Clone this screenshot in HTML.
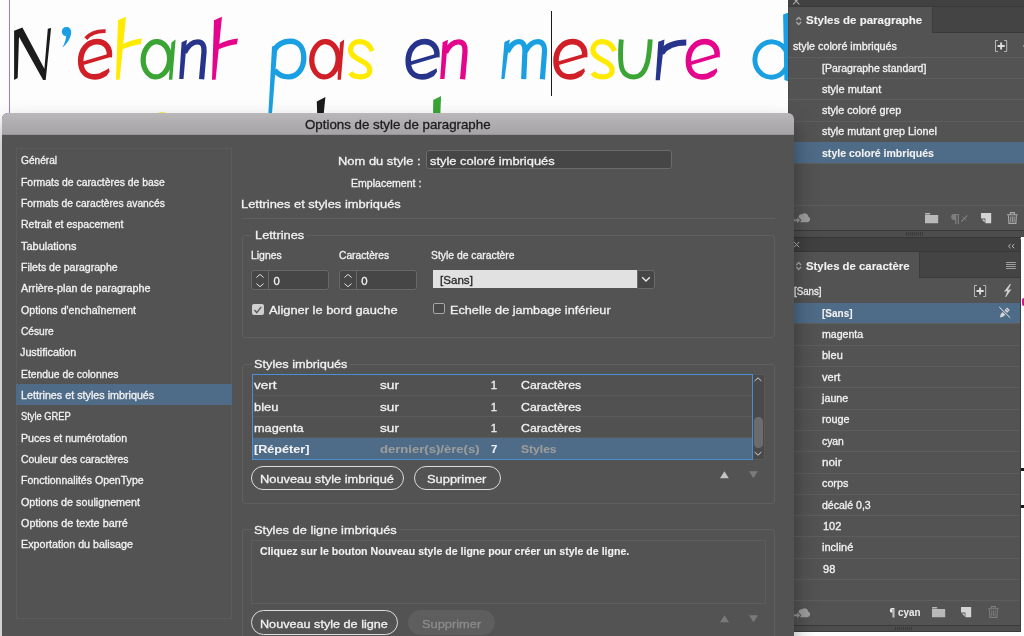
<!DOCTYPE html>
<html lang="fr">
<head>
<meta charset="utf-8">
<title>Options de style de paragraphe</title>
<style>
html,body{margin:0;padding:0;width:1024px;height:636px;overflow:hidden;}
body{width:1024px;height:636px;overflow:hidden;position:relative;background:#fdfdfd;font-family:"Liberation Sans",sans-serif;color:#f0f0f0;}
.abs{position:absolute;box-sizing:border-box;}
.t{position:absolute;white-space:pre;line-height:1;transform-origin:0 0;-webkit-text-stroke:0.3px currentColor;}
#ui{position:absolute;left:0;top:0;width:1024px;height:636px;overflow:hidden;will-change:transform;}
svg{position:absolute;overflow:visible;}
</style>
</head>
<body>
<div id="ui">
<div class="abs" style="left:0px;top:0px;width:788px;height:120px;background:#fdfdfd;"></div>
<div class="abs" style="left:9px;top:0px;width:1px;height:113px;background:#8f7cf2;"></div>
<svg style="left:0;top:0" width="788" height="120" viewBox="0 0 788 120"><g><path d="M14.1 30.7 L22.4 27.6 L44.4 68.8 L47.8 28.7 L51.1 28 L45.7 80.1 L43.1 80.1 L19 36.7 L17.7 78.1 L14.1 80.1 Z" fill="#1b1b1b"/><path d="M66.4 27 C69.2 27 71.2 29 71.2 32 C71.2 38 67 44 62.3 47.6 C64.5 44 66 40 66 36.1 C63.5 36.1 61.8 34 61.8 31.5 C61.8 29 63.8 27 66.4 27 Z" fill="#1aa0e2"/><g transform="translate(0,0)" fill="none" stroke="#d01f27"><path d="M83 63.2 L110.2 55.3" stroke-width="3.5"/><path d="M109.3 57.2 C110.6 47 104.5 41.6 97.2 41.6 C87.2 41.6 80.7 50 80.7 61 C80.7 71 86 76.9 94.6 76.9 C98.6 76.9 102 75.7 104.6 73.8" stroke-width="5.6"/><path d="M102.6 71.8 C105 70.6 107.2 69.4 108.9 68.2 L109.6 71.4 C108.4 73.4 107 75 106 76.4 Z" fill="#d01f27" stroke="none"/><path d="M85.8 38.6 C90.5 33.2 98 30.9 105.6 31.2" stroke-width="3.9"/></g><g transform="translate(0,0)" fill="#ffea00"><path d="M118 20.2 L126 16.7 L119.6 79.7 L116 79.7 Z"/><path d="M122.6 44.3 C128 41.3 135 39.4 142 38.6 L140.8 44.3 C134 45.1 128 46.9 122 49.6 Z"/></g><g transform="translate(0,0)"><ellipse cx="156.4" cy="59.3" rx="13.2" ry="17.6" fill="none" stroke="#3aa535" stroke-width="5.3" transform="rotate(4 156.4 59.3)"/><path d="M171.4 42.6 L175.6 39.6 L172.3 79.7 L168.9 79.7 Z" fill="#3aa535"/></g><g transform="translate(0,0)"><path d="M181.6 42.2 L186.9 39.8 L183.5 79 L179.2 79 Z" fill="#27348b"/><path d="M184.6 52.5 C188 45.5 193 41.8 197.8 41.8 C202.6 41.8 204.6 46 204 52 L201.6 79.2" fill="none" stroke="#27348b" stroke-width="5.3"/></g><g transform="translate(96,0)" fill="#e4058c"><path d="M118 20.2 L126 16.7 L119.6 79.7 L116 79.7 Z"/><path d="M122.6 44.3 C128 41.3 135 39.4 142 38.6 L140.8 44.3 C134 45.1 128 46.9 122 49.6 Z"/></g><path d="M272 46.4 L277.6 44.4 L272 113.5 L268.4 113.5 Z" fill="#1aa0e2"/><path d="M274.8 49.5 C278 44 283.5 41.2 290.5 41.2 C299 41.2 303.8 48 303.8 58 C303.8 69 297 76.9 288.5 76.9 C282.5 76.9 277.5 74 274.6 70" fill="none" stroke="#1aa0e2" stroke-width="5.4"/><g transform="translate(168.6,0)"><ellipse cx="156.4" cy="59.3" rx="13.2" ry="17.6" fill="none" stroke="#d01f27" stroke-width="5.3" transform="rotate(4 156.4 59.3)"/><path d="M171.4 42.6 L175.6 39.6 L172.3 79.7 L168.9 79.7 Z" fill="#d01f27"/></g><g transform="translate(0,0)"><path d="M372.2 51 C369.5 44.5 364.5 41.6 360 41.6 C354 41.6 350.6 45.5 350.6 50 C350.6 55 355 57.6 361 60.6 C367 63.6 369.8 66 369.8 70 C369.8 74.6 365.6 76.9 360.4 76.9 C356 76.9 352.2 75.6 350.2 72.8" fill="none" stroke="#ffea00" stroke-width="5.2"/></g><g transform="translate(327.5,0)" fill="none" stroke="#27348b"><path d="M83 63.2 L110.2 55.3" stroke-width="3.5"/><path d="M109.3 57.2 C110.6 47 104.5 41.6 97.2 41.6 C87.2 41.6 80.7 50 80.7 61 C80.7 71 86 76.9 94.6 76.9 C98.6 76.9 102 75.7 104.6 73.8" stroke-width="5.6"/><path d="M102.6 71.8 C105 70.6 107.2 69.4 108.9 68.2 L109.6 71.4 C108.4 73.4 107 75 106 76.4 Z" fill="#27348b" stroke="none"/></g><g transform="translate(261,0)"><path d="M181.6 42.2 L186.9 39.8 L183.5 79 L179.2 79 Z" fill="#e4058c"/><path d="M184.6 52.5 C188 45.5 193 41.8 197.8 41.8 C202.6 41.8 204.6 46 204 52 L201.6 79.2" fill="none" stroke="#e4058c" stroke-width="5.3"/></g><path d="M504.4 42 L509.8 39.6 L504.5 79 L501.3 79 Z" fill="#1aa0e2"/><path d="M507.4 52 C510.5 45.5 514.5 41.7 518.8 41.7 C523.2 41.7 525.2 45.6 524.9 51.5 L523.7 79.2 M525 52 C528.5 45.5 533 41.7 537.8 41.7 C543 41.7 545 46 544.5 52 L542.4 79.2" fill="none" stroke="#1aa0e2" stroke-width="5.2"/><g transform="translate(475.3,0)" fill="none" stroke="#d01f27"><path d="M83 63.2 L110.2 55.3" stroke-width="3.5"/><path d="M109.3 57.2 C110.6 47 104.5 41.6 97.2 41.6 C87.2 41.6 80.7 50 80.7 61 C80.7 71 86 76.9 94.6 76.9 C98.6 76.9 102 75.7 104.6 73.8" stroke-width="5.6"/><path d="M102.6 71.8 C105 70.6 107.2 69.4 108.9 68.2 L109.6 71.4 C108.4 73.4 107 75 106 76.4 Z" fill="#d01f27" stroke="none"/></g><g transform="translate(242.4,0)"><path d="M372.2 51 C369.5 44.5 364.5 41.6 360 41.6 C354 41.6 350.6 45.5 350.6 50 C350.6 55 355 57.6 361 60.6 C367 63.6 369.8 66 369.8 70 C369.8 74.6 365.6 76.9 360.4 76.9 C356 76.9 352.2 75.6 350.2 72.8" fill="none" stroke="#ffea00" stroke-width="5.2"/></g><path d="M621.3 39.5 C620 55 620 64 622.5 70 C625 75.5 629 77 634 77 C640 77 645 72 647.5 62 C649 55 649.8 47 650.2 39.4" fill="none" stroke="#3aa535" stroke-width="4.9"/><path d="M658.3 41.8 L664.5 39.4 L659.8 80.2 L655.6 80.2 Z" fill="#27348b"/><path d="M661.4 53 C666 46 675 42.6 686.3 42.6" fill="none" stroke="#27348b" stroke-width="6"/><g transform="translate(607.7,0)" fill="none" stroke="#e4058c"><path d="M83 63.2 L110.2 55.3" stroke-width="3.5"/><path d="M109.3 57.2 C110.6 47 104.5 41.6 97.2 41.6 C87.2 41.6 80.7 50 80.7 61 C80.7 71 86 76.9 94.6 76.9 C98.6 76.9 102 75.7 104.6 73.8" stroke-width="5.6"/><path d="M102.6 71.8 C105 70.6 107.2 69.4 108.9 68.2 L109.6 71.4 C108.4 73.4 107 75 106 76.4 Z" fill="#e4058c" stroke="none"/></g><ellipse cx="771.5" cy="59.5" rx="16.6" ry="17.7" fill="none" stroke="#1aa0e2" stroke-width="4.9" transform="rotate(4 771.5 59.5)"/><path d="M783.1 14.5 L790 12 L790 82 L784.4 80 Z" fill="#1aa0e2"/><path d="M316.8 101.4 L325.4 97.1 L323.6 115 L317.2 115 Z" fill="#1b1b1b"/><path d="M433.3 100 L441.1 96.1 L440.3 115 L433 115 Z" fill="#3aa535"/><ellipse cx="162" cy="113.7" rx="4.9" ry="1.5" fill="#ffea00"/></g></svg>
<div class="abs" style="left:551.1px;top:10.8px;width:1.1px;height:85.3px;background:#1a1a1a;"></div>
<div class="abs" style="left:1021px;top:237px;width:3px;height:399px;background:#fdfdfd;"></div>
<div class="abs" style="left:1021.9px;top:298.3px;width:2.1px;height:7.7px;background:#d4148c;border-radius:2px 0 0 2px;"></div>
<div class="abs" style="left:1021.3px;top:467.5px;width:2.7px;height:3px;background:#1a1a1a;"></div>
<div class="abs" style="left:1021.3px;top:504.5px;width:2.7px;height:3px;background:#1a1a1a;"></div>
<div class="abs" style="left:788px;top:0px;width:236px;height:237.4px;background:#535353;"></div>
<div class="abs" style="left:788px;top:0px;width:1px;height:237.4px;background:#484848;"></div>
<div class="abs" style="left:788px;top:0px;width:236px;height:6.4px;background:#414141;"></div>
<div class="abs" style="left:788px;top:6px;width:236px;height:1px;background:#3a3a3a;"></div>
<div class="abs" style="left:932.2px;top:7px;width:91.8px;height:25.2px;background:#444444;"></div>
<div class="abs" style="left:932.2px;top:7px;width:1px;height:25.2px;background:#3c3c3c;"></div>
<div class="abs" style="left:932.2px;top:31.7px;width:91.8px;height:1px;background:#3a3a3a;"></div>
<div class="t" style="left:805.80px;top:14.00px;font-size:11.15px;color:#f2f2f2;font-weight:700;-webkit-text-stroke-width:0.1px;transform:scaleX(1.0312);line-height:12px;">Styles de paragraphe</div>
<div class="t" style="left:793.40px;top:41.00px;font-size:10.15px;color:#f2f2f2;transform:scaleX(1.0616);line-height:11px;">style coloré imbriqués</div>
<div class="abs" style="left:788px;top:56.9px;width:236px;height:1px;background:#5d5d5d;"></div>
<div class="abs" style="left:788px;top:78.1px;width:236px;height:1px;background:#5d5d5d;"></div>
<div class="abs" style="left:788px;top:99.3px;width:236px;height:1px;background:#5d5d5d;"></div>
<div class="abs" style="left:788px;top:120.5px;width:236px;height:1px;background:#5d5d5d;"></div>
<div class="abs" style="left:788px;top:141.8px;width:236px;height:1px;background:#5d5d5d;"></div>
<div class="abs" style="left:788px;top:163.0px;width:236px;height:1px;background:#5d5d5d;"></div>
<div class="abs" style="left:788px;top:142px;width:236px;height:21.3px;background:#4e6b87;"></div>
<div class="t" style="left:822.00px;top:63.00px;font-size:10.15px;color:#f2f2f2;transform:scaleX(1.0356);line-height:11px;">[Paragraphe standard]</div>
<div class="t" style="left:822.00px;top:84.00px;font-size:10.15px;color:#f2f2f2;transform:scaleX(1.0855);line-height:11px;">style mutant</div>
<div class="t" style="left:822.00px;top:105.00px;font-size:10.15px;color:#f2f2f2;transform:scaleX(1.0662);line-height:11px;">style coloré grep</div>
<div class="t" style="left:822.00px;top:126.00px;font-size:10.15px;color:#f2f2f2;transform:scaleX(1.069);line-height:11px;">style mutant grep Lionel</div>
<div class="t" style="left:822.00px;top:148.00px;font-size:10.15px;color:#f2f2f2;font-weight:700;-webkit-text-stroke-width:0.1px;transform:scaleX(1.0414);line-height:11px;">style coloré imbriqués</div>
<div class="abs" style="left:788px;top:205.2px;width:236px;height:1px;background:#5d5d5d;"></div>
<div class="abs" style="left:788px;top:229.6px;width:236px;height:1.6px;background:#3a3a3a;"></div>
<div class="abs" style="left:788px;top:231.2px;width:236px;height:5.4px;background:#4d4d4d;"></div>
<svg style="left:792.8px;top:-2.3000000000000003px" width="6.4" height="6.4" viewBox="0 0 6.4 6.4"><path d="M0 0 L6.4 6.4 M6.4 0 L0 6.4" stroke="#a8a8a8" stroke-width="1.1" fill="none"/></svg>
<svg style="left:795.9px;top:16.8px" width="5.4" height="8" viewBox="0 0 5.4 8"><path d="M0.3 2.9 L2.7 0.5 L5.1 2.9 M0.3 5.1 L2.7 7.5 L5.1 5.1" stroke="#a8a8a8" stroke-width="1.35" fill="none"/></svg>
<svg style="left:994.8px;top:39.7px" width="12.2" height="12" viewBox="0 0 12.2 12"><rect x="1.4" y="1.4" width="9.4" height="9.2" fill="#4b4b4b"/><path d="M3 0.5 L0.5 0.5 L0.5 11.5 L3 11.5 M9.2 0.5 L11.7 0.5 L11.7 11.5 L9.2 11.5" stroke="#b9b9b9" stroke-width="1" fill="none"/><path d="M6.1 2.4 L6.1 9.6 M2.5 6 L9.7 6" stroke="#dedede" stroke-width="1.9" fill="none"/></svg>
<svg style="left:794.4px;top:212.3px" width="17" height="11.5" viewBox="0 0 17 11.5"><path d="M6.2 10.2 L13.6 10.2 A3 3 0 0 0 14.2 4.4 A3.6 3.6 0 0 0 8.2 2.2 A3.2 3.2 0 0 0 4.6 5.2 L7.3 8 Z" fill="#9d9d9d"/><path d="M0 7.3 L3.2 7.3 L3.2 5.3 L6.2 8.2 L3.2 11.2 L3.2 9.2 L0 9.2 Z" fill="#9d9d9d" opacity="0.85"/></svg>
<svg style="left:924.9px;top:212.6px" width="13.2" height="10.2" viewBox="0 0 13.2 10.2"><path d="M0 0.6 Q0 0 0.6 0 L4.6 0 Q5.2 0 5.2 0.6 L5.2 1.4 L0 1.4 Z M0 2.1 L13.2 2.1 L13.2 10.2 L0 10.2 Z" fill="#b9b9b9"/></svg>
<svg style="left:951px;top:213.5px" width="17" height="10.4" viewBox="0 0 17 10.4"><path d="M3.1 0 L8.2 0 L8.2 1 L7.9 1 L7.9 10.2 L6.7 10.2 L6.7 1 L5.3 1 L5.3 10.2 L4.1 10.2 L4.1 5.9 L3.1 5.9 A2.95 2.95 0 0 1 3.1 0 Z" fill="#7f7f7f"/><path d="M10.4 7.6 L16.4 1.4" stroke="#7f7f7f" stroke-width="1.25" fill="none"/><path d="M11.6 2.6 L15.4 6.4" stroke="#7f7f7f" stroke-width="0.9" fill="none"/></svg>
<svg style="left:980.9px;top:212.6px" width="10.2" height="10.2" viewBox="0 0 10.2 10.2"><path d="M0 0 L10.2 0 L10.2 10.2 L4.4 10.2 L4.4 5.4 L0 5.4 Z" fill="#d4d4d4"/><path d="M1 6.4 L3.6 6.4 L3.6 9.4 Z" fill="#d4d4d4"/></svg>
<svg style="left:1007.3px;top:211.9px" width="10.8" height="12" viewBox="0 0 10.8 12"><path d="M0 2.7 L10.8 2.7 M3.4 2.4 L3.4 0.6 L7.4 0.6 L7.4 2.4" stroke="#a9a9a9" stroke-width="1.1" fill="none"/><path d="M1.4 3.2 L1.9 11.4 L8.9 11.4 L9.4 3.2" stroke="#a9a9a9" stroke-width="1.1" fill="none"/><path d="M3.7 4.4 L3.7 10 M5.4 4.4 L5.4 10 M7.1 4.4 L7.1 10" stroke="#a9a9a9" stroke-width="0.9" fill="none"/></svg>
<svg style="left:906px;top:231.8px" width="18" height="3.8" viewBox="0 0 18 3.8"><rect x="0" y="0" width="1" height="3.8" fill="#3a3a3a"/><rect x="2" y="0" width="1" height="3.8" fill="#3a3a3a"/><rect x="4" y="0" width="1" height="3.8" fill="#3a3a3a"/><rect x="6" y="0" width="1" height="3.8" fill="#3a3a3a"/><rect x="8" y="0" width="1" height="3.8" fill="#3a3a3a"/><rect x="10" y="0" width="1" height="3.8" fill="#3a3a3a"/><rect x="12" y="0" width="1" height="3.8" fill="#3a3a3a"/><rect x="14" y="0" width="1" height="3.8" fill="#3a3a3a"/><rect x="16" y="0" width="1" height="3.8" fill="#3a3a3a"/></svg>
<div class="abs" style="left:1022.9px;top:45.4px;width:1.1px;height:2px;background:#8c8c8c;"></div>
<div class="abs" style="left:788px;top:237px;width:233.3px;height:395px;background:#535353;border-radius:0 4px 0 0;"></div>
<div class="abs" style="left:788px;top:237px;width:233.3px;height:14.6px;background:#404040;border-radius:0 4px 0 0;"></div>
<div class="abs" style="left:788px;top:251px;width:233.3px;height:1px;background:#393939;"></div>
<div class="abs" style="left:919.1px;top:252px;width:102.2px;height:25.6px;background:#444444;"></div>
<div class="abs" style="left:919.1px;top:252px;width:1px;height:25.6px;background:#3c3c3c;"></div>
<div class="abs" style="left:919.1px;top:277px;width:102.2px;height:1px;background:#3a3a3a;"></div>
<div class="t" style="left:805.80px;top:260.00px;font-size:11.02px;color:#f2f2f2;font-weight:700;-webkit-text-stroke-width:0.1px;transform:scaleX(1.0311);line-height:12px;">Styles de caractère</div>
<div class="t" style="left:793.80px;top:286.00px;font-size:10.15px;color:#f2f2f2;transform:scaleX(0.9592);line-height:11px;">[Sans]</div>
<div class="abs" style="left:788px;top:302.8px;width:233.3px;height:1px;background:#5d5d5d;"></div>
<div class="abs" style="left:788px;top:323.2px;width:233.3px;height:1px;background:#5d5d5d;"></div>
<div class="abs" style="left:788px;top:344.9px;width:233.3px;height:1px;background:#5d5d5d;"></div>
<div class="abs" style="left:788px;top:366.16999999999996px;width:233.3px;height:1px;background:#5d5d5d;"></div>
<div class="abs" style="left:788px;top:387.44px;width:233.3px;height:1px;background:#5d5d5d;"></div>
<div class="abs" style="left:788px;top:408.71px;width:233.3px;height:1px;background:#5d5d5d;"></div>
<div class="abs" style="left:788px;top:429.97999999999996px;width:233.3px;height:1px;background:#5d5d5d;"></div>
<div class="abs" style="left:788px;top:451.25px;width:233.3px;height:1px;background:#5d5d5d;"></div>
<div class="abs" style="left:788px;top:472.52px;width:233.3px;height:1px;background:#5d5d5d;"></div>
<div class="abs" style="left:788px;top:493.78999999999996px;width:233.3px;height:1px;background:#5d5d5d;"></div>
<div class="abs" style="left:788px;top:515.06px;width:233.3px;height:1px;background:#5d5d5d;"></div>
<div class="abs" style="left:788px;top:536.3299999999999px;width:233.3px;height:1px;background:#5d5d5d;"></div>
<div class="abs" style="left:788px;top:557.5999999999999px;width:233.3px;height:1px;background:#5d5d5d;"></div>
<div class="abs" style="left:788px;top:578.87px;width:233.3px;height:1px;background:#5d5d5d;"></div>
<div class="abs" style="left:788px;top:600.14px;width:233.3px;height:1px;background:#5d5d5d;"></div>
<div class="abs" style="left:788px;top:302.9px;width:233.3px;height:20.3px;background:#4e6b87;"></div>
<div class="t" style="left:822.20px;top:308.00px;font-size:10.15px;color:#f2f2f2;font-weight:700;-webkit-text-stroke-width:0.1px;transform:scaleX(0.9864);line-height:11px;">[Sans]</div>
<div class="t" style="left:822.20px;top:329.00px;font-size:10.15px;color:#f2f2f2;transform:scaleX(1.0455);line-height:11px;">magenta</div>
<div class="t" style="left:822.20px;top:350.00px;font-size:10.15px;color:#f2f2f2;transform:scaleX(1.0839);line-height:11px;">bleu</div>
<div class="t" style="left:822.20px;top:372.00px;font-size:10.15px;color:#f2f2f2;transform:scaleX(1.0874);line-height:11px;">vert</div>
<div class="t" style="left:822.20px;top:393.00px;font-size:10.15px;color:#f2f2f2;transform:scaleX(1.063);line-height:11px;">jaune</div>
<div class="t" style="left:822.20px;top:414.00px;font-size:10.15px;color:#f2f2f2;transform:scaleX(1.067);line-height:11px;">rouge</div>
<div class="t" style="left:822.20px;top:436.00px;font-size:10.15px;color:#f2f2f2;transform:scaleX(1.0214);line-height:11px;">cyan</div>
<div class="t" style="left:822.20px;top:457.00px;font-size:10.15px;color:#f2f2f2;transform:scaleX(1.158);line-height:11px;">noir</div>
<div class="t" style="left:822.20px;top:478.00px;font-size:10.15px;color:#f2f2f2;transform:scaleX(1.0637);line-height:11px;">corps</div>
<div class="t" style="left:822.20px;top:500.00px;font-size:10.15px;color:#f2f2f2;transform:scaleX(1.0418);line-height:11px;">décalé 0,3</div>
<div class="t" style="left:822.80px;top:521.00px;font-size:10.15px;color:#f2f2f2;transform:scaleX(1.0864);line-height:11px;">102</div>
<div class="t" style="left:822.20px;top:542.00px;font-size:10.15px;color:#f2f2f2;transform:scaleX(1.0912);line-height:11px;">incliné</div>
<div class="t" style="left:822.80px;top:564.00px;font-size:10.15px;color:#f2f2f2;transform:scaleX(1.0894);line-height:11px;">98</div>
<div class="t" style="left:898.20px;top:607.00px;font-size:10.1px;color:#e8e8e8;font-weight:700;-webkit-text-stroke-width:0.1px;transform:scaleX(0.973);line-height:11px;">cyan</div>
<div class="abs" style="left:788px;top:624.5px;width:233.3px;height:1.8px;background:#3a3a3a;"></div>
<div class="abs" style="left:788px;top:626.3px;width:233.3px;height:5.4px;background:#4d4d4d;"></div>
<div class="abs" style="left:788px;top:631.2px;width:233.3px;height:0.8px;background:#3a3a3a;"></div>
<div class="abs" style="left:1020.3px;top:240px;width:1px;height:392px;background:#3e3e3e;"></div>
<div class="abs" style="left:788px;top:236.8px;width:233.3px;height:1px;background:#363636;"></div>
<svg style="left:794.3px;top:242.4px" width="5.2" height="5.2" viewBox="0 0 5.2 5.2"><path d="M0 0 L5.2 5.2 M5.2 0 L0 5.2" stroke="#b4b4b4" stroke-width="1" fill="none"/></svg>
<svg style="left:1007.8px;top:243.9px" width="7" height="4.4" viewBox="0 0 7 4.4"><path d="M2.6 0.2 L0.5 2.2 L2.6 4.2 M6.2 0.2 L4.1 2.2 L6.2 4.2" stroke="#cfcfcf" stroke-width="0.9" fill="none"/></svg>
<svg style="left:795.9px;top:261.6px" width="5.4" height="8" viewBox="0 0 5.4 8"><path d="M0.3 2.9 L2.7 0.5 L5.1 2.9 M0.3 5.1 L2.7 7.5 L5.1 5.1" stroke="#a8a8a8" stroke-width="1.35" fill="none"/></svg>
<svg style="left:1005.5px;top:261.8px" width="9.8" height="7" viewBox="0 0 9.8 7"><rect x="0" y="0" width="9.8" height="1" fill="#9e9e9e"/><rect x="0" y="2" width="9.8" height="1" fill="#9e9e9e"/><rect x="0" y="4" width="9.8" height="1" fill="#9e9e9e"/><rect x="0" y="6" width="9.8" height="1" fill="#9e9e9e"/></svg>
<svg style="left:974.2px;top:284.8px" width="12.2" height="12" viewBox="0 0 12.2 12"><rect x="1.4" y="1.4" width="9.4" height="9.2" fill="#4b4b4b"/><path d="M3 0.5 L0.5 0.5 L0.5 11.5 L3 11.5 M9.2 0.5 L11.7 0.5 L11.7 11.5 L9.2 11.5" stroke="#b9b9b9" stroke-width="1" fill="none"/><path d="M6.1 2.4 L6.1 9.6 M2.5 6 L9.7 6" stroke="#dedede" stroke-width="1.9" fill="none"/></svg>
<svg style="left:1003.3px;top:283.8px" width="8.5" height="13" viewBox="0 0 8.5 13"><path d="M6.9 0 L0.9 7.7 L4.3 7 L2.2 13 L3 13 L8.4 5.2 L5 5.9 L8 0 Z" fill="#d0d0d0"/></svg>
<svg style="left:998.7px;top:307.2px" width="11.4" height="11" viewBox="0 0 11.4 11"><path d="M8.2 0.6 L10.8 3.2 L4.4 9.6 L0.8 10.6 L1.8 7 Z" fill="#d8d8d8"/><path d="M7 1.8 L9.6 4.4" stroke="#4e6b87" stroke-width="0.8"/><path d="M0 -0.4 L11.4 11" stroke="#4e6b87" stroke-width="2.6"/><path d="M0.2 0 L11.2 10.8" stroke="#ececec" stroke-width="1"/></svg>
<svg style="left:794.4px;top:606.8px" width="17" height="11.5" viewBox="0 0 17 11.5"><path d="M6.2 10.2 L13.6 10.2 A3 3 0 0 0 14.2 4.4 A3.6 3.6 0 0 0 8.2 2.2 A3.2 3.2 0 0 0 4.6 5.2 L7.3 8 Z" fill="#9d9d9d"/><path d="M0 7.3 L3.2 7.3 L3.2 5.3 L6.2 8.2 L3.2 11.2 L3.2 9.2 L0 9.2 Z" fill="#9d9d9d" opacity="0.85"/></svg>
<svg style="left:890.4px;top:607.8px" width="4.4" height="9.6" viewBox="0 0 4.4 9.6"><path d="M2.2 0 L4.4 0 L4.4 9.6 L3.3 9.6 L3.3 0.9 L2.6 0.9 L2.6 9.6 L2.2 9.6 L2.2 4.8 A2.4 2.4 0 0 1 2.2 0 Z" fill="#ececec"/></svg>
<svg style="left:932px;top:606.9px" width="13.2" height="10.2" viewBox="0 0 13.2 10.2"><path d="M0 0.6 Q0 0 0.6 0 L4.6 0 Q5.2 0 5.2 0.6 L5.2 1.4 L0 1.4 Z M0 2.1 L13.2 2.1 L13.2 10.2 L0 10.2 Z" fill="#b9b9b9"/></svg>
<svg style="left:961px;top:606.9px" width="10.2" height="10.2" viewBox="0 0 10.2 10.2"><path d="M0 0 L10.2 0 L10.2 10.2 L4.4 10.2 L4.4 5.4 L0 5.4 Z" fill="#d4d4d4"/><path d="M1 6.4 L3.6 6.4 L3.6 9.4 Z" fill="#d4d4d4"/></svg>
<svg style="left:987.6px;top:606.2px" width="10.8" height="12" viewBox="0 0 10.8 12"><path d="M0 2.7 L10.8 2.7 M3.4 2.4 L3.4 0.6 L7.4 0.6 L7.4 2.4" stroke="#7d7d7d" stroke-width="1.1" fill="none"/><path d="M1.4 3.2 L1.9 11.4 L8.9 11.4 L9.4 3.2" stroke="#7d7d7d" stroke-width="1.1" fill="none"/><path d="M3.7 4.4 L3.7 10 M5.4 4.4 L5.4 10 M7.1 4.4 L7.1 10" stroke="#7d7d7d" stroke-width="0.9" fill="none"/></svg>
<svg style="left:895px;top:627px" width="19" height="3" viewBox="0 0 19 3"><rect x="0" y="0" width="1" height="3" fill="#3a3a3a"/><rect x="2" y="0" width="1" height="3" fill="#3a3a3a"/><rect x="4" y="0" width="1" height="3" fill="#3a3a3a"/><rect x="6" y="0" width="1" height="3" fill="#3a3a3a"/><rect x="8" y="0" width="1" height="3" fill="#3a3a3a"/><rect x="10" y="0" width="1" height="3" fill="#3a3a3a"/><rect x="12" y="0" width="1" height="3" fill="#3a3a3a"/><rect x="14" y="0" width="1" height="3" fill="#3a3a3a"/><rect x="16" y="0" width="1" height="3" fill="#3a3a3a"/></svg>
<div class="abs" style="left:2px;top:113.3px;width:792px;height:530px;background:#535353;border-radius:6px 6px 0 0;box-shadow:0 12px 22px rgba(0,0,0,.37);"></div>
<div class="abs" style="left:2px;top:113.3px;width:792px;height:21.5px;background:linear-gradient(#b9b7b9,#a6a4a6);border-radius:6px 6px 0 0;border-bottom:1px solid #979597;"></div>
<div class="t" style="left:304.90px;top:117.00px;font-size:12.8px;color:#1c1c1c;transform:scaleX(1.0391);line-height:15px;">Options de style de paragraphe</div>
<div class="abs" style="left:16px;top:147.5px;width:216.2px;height:471.6px;border:1px solid #5b5b5b;"></div>
<div class="abs" style="left:16.3px;top:384.3px;width:215.3px;height:20.6px;background:#4e6b87;"></div>
<div class="t" style="left:21.10px;top:155.00px;font-size:10.1px;color:#f2f2f2;transform:scaleX(1.0047);line-height:11px;">Général</div>
<div class="t" style="left:21.10px;top:177.00px;font-size:10.1px;color:#f2f2f2;transform:scaleX(1.0295);line-height:11px;">Formats de caractères de base</div>
<div class="t" style="left:21.10px;top:198.00px;font-size:10.1px;color:#f2f2f2;transform:scaleX(1.0172);line-height:11px;">Formats de caractères avancés</div>
<div class="t" style="left:21.10px;top:219.00px;font-size:10.1px;color:#f2f2f2;transform:scaleX(1.0384);line-height:11px;">Retrait et espacement</div>
<div class="t" style="left:21.10px;top:241.00px;font-size:10.1px;color:#f2f2f2;transform:scaleX(1.0842);line-height:11px;">Tabulations</div>
<div class="t" style="left:21.10px;top:262.00px;font-size:10.1px;color:#f2f2f2;transform:scaleX(1.0438);line-height:11px;">Filets de paragraphe</div>
<div class="t" style="left:21.10px;top:283.00px;font-size:10.1px;color:#f2f2f2;transform:scaleX(1.0695);line-height:11px;">Arrière-plan de paragraphe</div>
<div class="t" style="left:21.10px;top:305.00px;font-size:10.1px;color:#f2f2f2;transform:scaleX(1.0543);line-height:11px;">Options d&#x27;enchaînement</div>
<div class="t" style="left:21.10px;top:326.00px;font-size:10.1px;color:#f2f2f2;transform:scaleX(1.0074);line-height:11px;">Césure</div>
<div class="t" style="left:20.20px;top:347.00px;font-size:10.1px;color:#f2f2f2;transform:scaleX(1.0669);line-height:11px;">Justification</div>
<div class="t" style="left:21.10px;top:369.00px;font-size:10.1px;color:#f2f2f2;transform:scaleX(1.0263);line-height:11px;">Etendue de colonnes</div>
<div class="t" style="left:21.10px;top:390.00px;font-size:10.1px;color:#f2f2f2;transform:scaleX(1.0649);line-height:11px;">Lettrines et styles imbriqués</div>
<div class="t" style="left:21.10px;top:411.00px;font-size:10.1px;color:#f2f2f2;transform:scaleX(0.9242);line-height:11px;">Style GREP</div>
<div class="t" style="left:21.10px;top:433.00px;font-size:10.1px;color:#f2f2f2;transform:scaleX(1.0509);line-height:11px;">Puces et numérotation</div>
<div class="t" style="left:21.10px;top:454.00px;font-size:10.1px;color:#f2f2f2;transform:scaleX(1.0305);line-height:11px;">Couleur des caractères</div>
<div class="t" style="left:21.10px;top:475.00px;font-size:10.1px;color:#f2f2f2;transform:scaleX(1.0456);line-height:11px;">Fonctionnalités OpenType</div>
<div class="t" style="left:21.10px;top:497.00px;font-size:10.1px;color:#f2f2f2;transform:scaleX(1.066);line-height:11px;">Options de soulignement</div>
<div class="t" style="left:21.10px;top:518.00px;font-size:10.1px;color:#f2f2f2;transform:scaleX(1.0697);line-height:11px;">Options de texte barré</div>
<div class="t" style="left:21.10px;top:539.00px;font-size:10.1px;color:#f2f2f2;transform:scaleX(1.061);line-height:11px;">Exportation du balisage</div>
<div class="t" style="left:338.30px;top:154.00px;font-size:11.84px;color:#f2f2f2;transform:scaleX(1.0929);line-height:14px;">Nom du style :</div>
<div class="abs" style="left:425.5px;top:150px;width:246.3px;height:19.3px;background:#464646;border:1px solid #6b6b6b;border-radius:3px;"></div>
<div class="t" style="left:430.20px;top:154.00px;font-size:11.8px;color:#f2f2f2;transform:scaleX(1.0928);line-height:14px;">style coloré imbriqués</div>
<div class="t" style="left:350.60px;top:178.00px;font-size:10.24px;color:#f2f2f2;transform:scaleX(1.0308);line-height:11px;">Emplacement :</div>
<div class="t" style="left:241.20px;top:197.00px;font-size:11.8px;color:#f2f2f2;transform:scaleX(1.0927);line-height:14px;">Lettrines et styles imbriqués</div>
<div class="abs" style="left:242px;top:218.2px;width:533px;height:1px;background:#5f5f5f;"></div>
<div class="abs" style="left:241.8px;top:235px;width:533px;height:103px;border:1px solid #5f5f5f;border-radius:3px;"></div>
<div class="abs" style="left:252px;top:230px;width:54px;height:10px;background:#535353;"></div>
<div class="t" style="left:254.60px;top:228.00px;font-size:11.74px;color:#f2f2f2;transform:scaleX(1.0926);line-height:13px;">Lettrines</div>
<div class="t" style="left:250.70px;top:250.00px;font-size:10.1px;color:#f2f2f2;transform:scaleX(1.0315);line-height:11px;">Lignes</div>
<div class="t" style="left:338.60px;top:250.00px;font-size:10.1px;color:#f2f2f2;transform:scaleX(1.0143);line-height:11px;">Caractères</div>
<div class="t" style="left:431.35px;top:250.00px;font-size:10.1px;color:#f2f2f2;transform:scaleX(1.0264);line-height:11px;">Style de caractère</div>
<div class="abs" style="left:251.4px;top:270px;width:77.6px;height:19.5px;background:#464646;border:1px solid #686868;border-radius:3px;"></div>
<div class="abs" style="left:268.2px;top:270.5px;width:1px;height:18.5px;background:#686868;"></div>
<svg style="left:255.3px;top:273.5px" width="10" height="13" viewBox="0 0 10 13"><path d="M1.4 3.5 L5 0.4 L8.6 3.5 M1.4 9.6 L5 12.7 L8.6 9.6" fill="none" stroke="#e0e0e0" stroke-width="1"/></svg>
<div class="t" style="left:273.50px;top:275.00px;font-size:11.4px;color:#f2f2f2;line-height:12px;">0</div>
<div class="abs" style="left:339.2px;top:270px;width:77.6px;height:19.5px;background:#464646;border:1px solid #686868;border-radius:3px;"></div>
<div class="abs" style="left:356.0px;top:270.5px;width:1px;height:18.5px;background:#686868;"></div>
<svg style="left:343.09999999999997px;top:273.5px" width="10" height="13" viewBox="0 0 10 13"><path d="M1.4 3.5 L5 0.4 L8.6 3.5 M1.4 9.6 L5 12.7 L8.6 9.6" fill="none" stroke="#e0e0e0" stroke-width="1"/></svg>
<div class="t" style="left:361.30px;top:275.00px;font-size:11.4px;color:#f2f2f2;line-height:12px;">0</div>
<div class="abs" style="left:432.6px;top:270.2px;width:204.4px;height:18.2px;background:#e1e1e1;"></div>
<div class="t" style="left:440.20px;top:274.00px;font-size:11.4px;color:#262626;transform:scaleX(1.018);line-height:12px;">[Sans]</div>
<div class="abs" style="left:636.8px;top:269.5px;width:18px;height:19.2px;background:#464646;border:1px solid #6a6a6a;border-radius:0 3px 3px 0;"></div>
<svg style="left:641px;top:276px" width="10" height="7" viewBox="0 0 10 7"><path d="M1.2 1.2 L5 5 L8.8 1.2" fill="none" stroke="#ececec" stroke-width="1.3"/></svg>
<div class="abs" style="left:252px;top:303.6px;width:11.6px;height:11.6px;background:#cfcfcf;border-radius:2px;"></div>
<svg style="left:252px;top:303.6px" width="11.6" height="11.6" viewBox="0 0 11.6 11.6"><path d="M2.4 6 L4.8 8.6 L9.2 2.8" fill="none" stroke="#5c5c5c" stroke-width="1.4"/></svg>
<div class="t" style="left:269.10px;top:303.00px;font-size:11.77px;color:#f2f2f2;transform:scaleX(1.0927);line-height:13px;">Aligner le bord gauche</div>
<div class="abs" style="left:433.1px;top:302.8px;width:11.8px;height:11.4px;background:#494949;border:1px solid #a6a6a6;border-radius:2px;"></div>
<div class="t" style="left:450.10px;top:303.00px;font-size:11.6px;color:#f2f2f2;transform:scaleX(1.093);line-height:13px;">Echelle de jambage inférieur</div>
<div class="abs" style="left:241.8px;top:364px;width:533px;height:140.3px;border:1px solid #5f5f5f;border-radius:3px;"></div>
<div class="abs" style="left:252px;top:359px;width:98px;height:10px;background:#535353;"></div>
<div class="t" style="left:254.10px;top:357.00px;font-size:11.67px;color:#f2f2f2;transform:scaleX(1.0933);line-height:13px;">Styles imbriqués</div>
<div class="abs" style="left:251.6px;top:374.2px;width:501.2px;height:85.6px;background:#515151;border:1px solid #4a8fd6;"></div>
<div class="abs" style="left:252.6px;top:394.7px;width:499.2px;height:1px;background:#5a5a5a;"></div>
<div class="abs" style="left:252.6px;top:416.0px;width:499.2px;height:1px;background:#5a5a5a;"></div>
<div class="abs" style="left:252.6px;top:437.3px;width:499.2px;height:1px;background:#5a5a5a;"></div>
<div class="abs" style="left:252.6px;top:438.2px;width:499.2px;height:20.6px;background:#4e6b87;"></div>
<div class="t" style="left:253.50px;top:379.00px;font-size:11.4px;color:#f2f2f2;transform:scaleX(1.1892);line-height:12px;">vert</div>
<div class="t" style="left:380.10px;top:379.00px;font-size:11.4px;color:#f2f2f2;transform:scaleX(1.1997);line-height:12px;">sur</div>
<div class="t" style="left:490.80px;top:379.00px;font-size:11.4px;color:#f2f2f2;line-height:12px;">1</div>
<div class="t" style="left:520.50px;top:379.00px;font-size:11.4px;color:#f2f2f2;transform:scaleX(1.0798);line-height:12px;">Caractères</div>
<div class="t" style="left:253.50px;top:401.00px;font-size:11.4px;color:#f2f2f2;transform:scaleX(1.1367);line-height:12px;">bleu</div>
<div class="t" style="left:380.10px;top:401.00px;font-size:11.4px;color:#f2f2f2;transform:scaleX(1.1997);line-height:12px;">sur</div>
<div class="t" style="left:490.80px;top:401.00px;font-size:11.4px;color:#f2f2f2;line-height:12px;">1</div>
<div class="t" style="left:520.50px;top:401.00px;font-size:11.4px;color:#f2f2f2;transform:scaleX(1.0798);line-height:12px;">Caractères</div>
<div class="t" style="left:253.50px;top:422.00px;font-size:11.4px;color:#f2f2f2;transform:scaleX(1.118);line-height:12px;">magenta</div>
<div class="t" style="left:380.10px;top:422.00px;font-size:11.4px;color:#f2f2f2;transform:scaleX(1.1997);line-height:12px;">sur</div>
<div class="t" style="left:490.80px;top:422.00px;font-size:11.4px;color:#f2f2f2;line-height:12px;">1</div>
<div class="t" style="left:520.50px;top:422.00px;font-size:11.4px;color:#f2f2f2;transform:scaleX(1.0798);line-height:12px;">Caractères</div>
<div class="t" style="left:253.50px;top:443.00px;font-size:11.4px;color:#f2f2f2;font-weight:700;-webkit-text-stroke-width:0.1px;transform:scaleX(1.1071);line-height:12px;">[Répéter]</div>
<div class="t" style="left:380.10px;top:443.00px;font-size:11.4px;color:#9c9c9c;font-weight:700;-webkit-text-stroke-width:0.1px;transform:scaleX(1.1486);line-height:12px;">dernier(s)/ère(s)</div>
<div class="t" style="left:490.90px;top:443.00px;font-size:11.4px;color:#f2f2f2;font-weight:700;-webkit-text-stroke-width:0.1px;line-height:12px;">7</div>
<div class="t" style="left:520.50px;top:443.00px;font-size:11.4px;color:#9c9c9c;font-weight:700;-webkit-text-stroke-width:0.1px;transform:scaleX(1.0599);line-height:12px;">Styles</div>
<div class="abs" style="left:753px;top:374.2px;width:11.6px;height:85.4px;background:#4a4a4a;border:1px solid #595959;border-left:none;"></div>
<div class="abs" style="left:754.3px;top:417.2px;width:8.6px;height:30.4px;background:#6c6c6c;border-radius:4.3px;"></div>
<svg style="left:754.4px;top:377.2px" width="8" height="5" viewBox="0 0 8 5"><path d="M0.6 4 L4 0.8 L7.4 4" fill="none" stroke="#d6d6d6" stroke-width="1"/></svg>
<svg style="left:754.4px;top:451px" width="8" height="5" viewBox="0 0 8 5"><path d="M0.6 1 L4 4.2 L7.4 1" fill="none" stroke="#d6d6d6" stroke-width="1"/></svg>
<div class="abs" style="left:251.3px;top:465.6px;width:152.5px;height:24.8px;border:1px solid #dcdcdc;border-radius:13px;"></div>
<div class="t" style="left:260.30px;top:472.00px;font-size:11.72px;color:#f2f2f2;transform:scaleX(1.0933);line-height:13px;">Nouveau style imbriqué</div>
<div class="abs" style="left:414.1px;top:465.6px;width:86.8px;height:24.8px;border:1px solid #dcdcdc;border-radius:13px;"></div>
<div class="t" style="left:427.20px;top:472.00px;font-size:11.78px;color:#f2f2f2;transform:scaleX(1.0931);line-height:13px;">Supprimer</div>
<svg style="left:719.8px;top:470.8px" width="8.8" height="7.6" viewBox="0 0 10 8"><path d="M5 0 L10 8 L0 8 Z" fill="#c4c4c4"/></svg>
<svg style="left:749.1px;top:470.8px" width="8.8" height="7.6" viewBox="0 0 10 8"><path d="M0 0 L10 0 L5 8 Z" fill="#7c7c7c"/></svg>
<div class="abs" style="left:241.8px;top:528.9px;width:533px;height:120px;border:1px solid #5f5f5f;border-radius:3px;"></div>
<div class="abs" style="left:252px;top:524px;width:147px;height:10px;background:#535353;"></div>
<div class="t" style="left:254.10px;top:523.00px;font-size:11.75px;color:#f2f2f2;transform:scaleX(1.0932);line-height:13px;">Styles de ligne imbriqués</div>
<div class="abs" style="left:251.4px;top:539.5px;width:514.2px;height:64.8px;border:1px solid #5d5d5d;"></div>
<div class="t" style="left:260.40px;top:546.00px;font-size:10.27px;color:#f2f2f2;font-weight:700;-webkit-text-stroke-width:0.1px;transform:scaleX(1.0308);line-height:11px;">Cliquez sur le bouton Nouveau style de ligne pour créer un style de ligne.</div>
<div class="abs" style="left:251.3px;top:610.1px;width:146.9px;height:24.7px;border:1px solid #dcdcdc;border-radius:13px;"></div>
<div class="t" style="left:260.30px;top:618.00px;font-size:11.57px;color:#f2f2f2;transform:scaleX(1.0926);line-height:12px;">Nouveau style de ligne</div>
<div class="abs" style="left:408.1px;top:610.1px;width:86.7px;height:24.7px;background:#5e5e5e;border-radius:13px;"></div>
<div class="t" style="left:421.70px;top:617.00px;font-size:11.74px;color:#8c8c8c;transform:scaleX(1.0932);line-height:13px;">Supprimer</div>
<svg style="left:719.8px;top:614.8px" width="9" height="7.5" viewBox="0 0 10 8"><path d="M5 0 L10 8 L0 8 Z" fill="#7a7a7a"/></svg>
<svg style="left:748.8px;top:614.8px" width="9" height="7.5" viewBox="0 0 10 8"><path d="M0 0 L10 0 L5 8 Z" fill="#7a7a7a"/></svg>
</div>
</body>
</html>
